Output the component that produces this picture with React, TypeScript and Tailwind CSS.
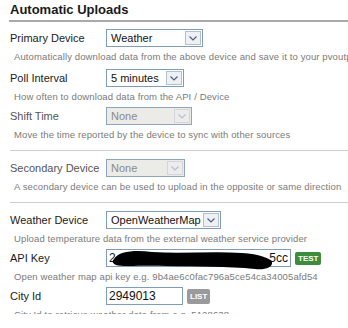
import React from "react";

const Chevron = ({ faded }: { faded?: boolean }) => (
  <svg width="8" height="5" viewBox="0 0 8 5">
    <path d="M0.5 0.5 L4 4 L7.5 0.5" fill="none" stroke={faded ? "#b9bfc8" : "#4d6185"} strokeWidth="1.2" />
  </svg>
);

const Select = ({ value, width, disabled }: { value: string; width: string; disabled?: boolean }) => (
  <div
    className={`flex h-[18px] items-stretch border ${width} ${
      disabled ? "border-[#8ea4bf] bg-[#ebebe8] text-[#8a8a8a]" : "border-[#7f9db9] bg-white text-[#111]"
    }`}
  >
    <span className="flex-1 pl-[4px] text-[11px] leading-[16px] whitespace-nowrap">{value}</span>
    <span
      className={`m-px flex w-[16px] items-center justify-center border ${
        disabled ? "border-[#d2d6dc] bg-[#ececec]" : "border-[#b5c0cf] bg-[#eef0f4]"
      }`}
    >
      <Chevron faded={disabled} />
    </span>
  </div>
);

const Label = ({ text, muted }: { text: string; muted?: boolean }) => (
  <div className={`w-[96px] shrink-0 text-[11px] ${muted ? "text-[#555]" : "text-[#1a1a1a]"}`}>{text}</div>
);

const Desc = ({ text }: { text: string }) => (
  <div className="mt-[4px] mb-[4px] pl-[4px] text-[9.5px] leading-[12px] whitespace-nowrap text-[#7a7a7a] tracking-[0.12px]">
    {text}
  </div>
);

export default function App() {
  return (
    <div className="h-[328px] w-[348px] overflow-hidden bg-white font-['Liberation_Sans',Arial,sans-serif]">
      <div className="h-[314px] overflow-hidden">
        <div className="ml-[9px] border-b-2 border-[#a9a9a9] pt-[2px] pb-[2px] pl-px text-[13px] leading-[16px] font-bold text-[#1a1a1a]">
          Automatic Uploads
        </div>

        <div className="pl-[10px] pt-[7px]">
          <div className="flex items-center">
            <Label text="Primary Device" />
            <Select value="Weather" width="w-[97px]" />
          </div>
          <Desc text="Automatically download data from the above device and save it to your pvoutput account" />

          <div className="mt-[6px] flex items-center">
            <Label text="Poll Interval" />
            <Select value="5 minutes" width="w-[78px]" />
          </div>
          <Desc text="How often to download data from the API / Device" />

          <div className="flex items-center">
            <Label text="Shift Time" muted />
            <Select value="None" width="w-[86px]" disabled />
          </div>
          <Desc text="Move the time reported by the device to sync with other sources" />

          <div className="mt-[9px] mb-[8px] h-px bg-[#cfcfcf]" />

          <div className="flex items-center">
            <Label text="Secondary Device" muted />
            <Select value="None" width="w-[79px]" disabled />
          </div>
          <Desc text="A secondary device can be used to upload in the opposite or same direction" />

          <div className="mt-[9px] mb-[8px] h-px bg-[#cfcfcf]" />

          <div className="flex items-center">
            <Label text="Weather Device" />
            <Select value="OpenWeatherMap" width="w-[115px]" />
          </div>
          <Desc text="Upload temperature data from the external weather service provider" />

          <div className="flex items-center">
            <Label text="API Key" />
            <div className="relative flex h-[18px] w-[185px] items-center justify-between border border-[#7f9db9] bg-white px-[2px] text-[12px] text-[#111]">
              <span>2</span>
              <span>5cc</span>
              <svg className="absolute left-0 top-0" width="185" height="20" viewBox="0 0 185 20">
                <path
                  d="M7 9 C12 1 28 0 45 2 C75 4 105 1 135 3 C152 4 163 8 165 12 C166 18 157 20 148 19 C120 16 90 17 60 16 C35 15 16 17 9 15 C5 13 5 11 7 9 Z"
                  fill="#000"
                />
              </svg>
            </div>
            <button className="ml-[4px] h-[13px] rounded-[2px] bg-[#3d8b3d] px-[3px] text-[8px] leading-[13px] font-bold text-white">
              TEST
            </button>
          </div>
          <Desc text="Open weather map api key e.g. 9b4ae6c0fac796a5ce54ca34005afd54" />

          <div className="flex items-center">
            <Label text="City Id" />
            <div className="flex h-[18px] w-[77px] items-center border border-[#7f9db9] bg-white px-[2px] text-[12px] text-[#111]">
              2949013
            </div>
            <button className="ml-[4px] h-[15px] rounded-[2px] bg-[#9a9a9a] px-[3px] text-[8px] leading-[15px] font-bold text-white">
              LIST
            </button>
          </div>
          <Desc text="City Id to retrieve weather data from e.g. 5128638" />
        </div>
      </div>
    </div>
  );
}
